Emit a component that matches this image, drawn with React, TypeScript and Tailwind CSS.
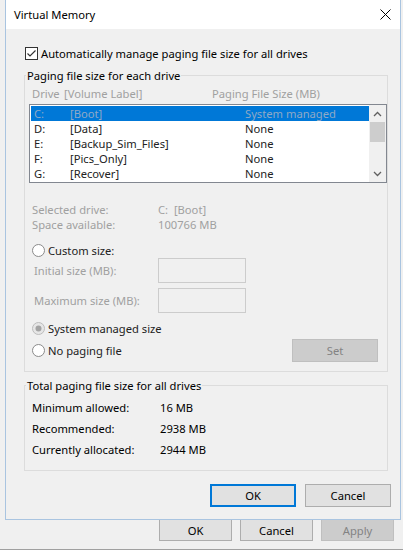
import { type ReactNode } from 'react';
import clsx from 'clsx';

type Drive = { letter: string; label: string; size: string; selected?: boolean };

const drives: Drive[] = [
  { letter: 'C:', label: '[Boot]', size: 'System managed', selected: true },
  { letter: 'D:', label: '[Data]', size: 'None' },
  { letter: 'E:', label: '[Backup_Sim_Files]', size: 'None' },
  { letter: 'F:', label: '[Pics_Only]', size: 'None' },
  { letter: 'G:', label: '[Recover]', size: 'None' },
];

const totals = [
  { label: 'Minimum allowed:', value: '16 MB' },
  { label: 'Recommended:', value: '2938 MB' },
  { label: 'Currently allocated:', value: '2944 MB' },
];

function CheckBox() {
  return (
    <svg width="13" height="13" viewBox="0 0 13 13" className="shrink-0">
      <rect x="0.5" y="0.5" width="12" height="12" fill="#fff" stroke="#333" />
      <path d="M2.5 6.5 L5 9 L10.5 3.5" fill="none" stroke="#333" strokeWidth="1.2" />
    </svg>
  );
}

function Radio({ checked = false, disabled = false }: { checked?: boolean; disabled?: boolean }) {
  return (
    <svg width="13" height="13" viewBox="0 0 13 13" className="shrink-0">
      <circle cx="6.5" cy="6.5" r="6" fill={disabled ? '#e6e6e6' : '#fff'} stroke={disabled ? '#bcbcbc' : '#8a8a8a'} />
      {checked && <circle cx="6.5" cy="6.5" r="3" fill="#a3a3a3" />}
    </svg>
  );
}

function GroupBox({ title, className, children }: { title: string; className?: string; children?: ReactNode }) {
  return (
    <div className={clsx('relative border border-[#dcdcdc]', className)}>
      <span className="absolute -top-[8px] left-[1px] bg-[#f0f0f0] px-px leading-[15px] text-black">{title}</span>
      {children}
    </div>
  );
}

function Chevron({ up }: { up?: boolean }) {
  return (
    <svg width="9" height="6" viewBox="0 0 9 6">
      <path d={up ? 'M1 5 L4.5 1.5 L8 5' : 'M1 1 L4.5 4.5 L8 1'} fill="none" stroke="#606060" strokeWidth="1.3" />
    </svg>
  );
}

function DriveList() {
  return (
    <div className="ml-[4px] mt-[3px] flex h-[79px] w-[358px] border border-[#828790] bg-white">
      <div className="flex-1 pl-px pt-px">
        {drives.map((d) => (
          <div
            key={d.letter}
            className={clsx(
              'flex h-[15px] items-center pl-[3px] leading-[14px]',
              d.selected ? 'bg-[#0078d7] text-[#8fa9c6]' : 'text-[#222]'
            )}
          >
            <span className="w-[36px]">{d.letter}</span>
            <span className="w-[175px]">{d.label}</span>
            <span>{d.size}</span>
          </div>
        ))}
      </div>
      <div className="flex w-[17px] flex-col items-center bg-[#f0f0f0]">
        <div className="flex h-[17px] items-center justify-center">
          <Chevron up />
        </div>
        <div className="h-[20px] w-[15px] bg-[#cdcdcd]" />
        <div className="flex-1" />
        <div className="flex h-[17px] items-center justify-center">
          <Chevron />
        </div>
      </div>
    </div>
  );
}

function Button({ children, primary, disabled, className }: { children: ReactNode; primary?: boolean; disabled?: boolean; className?: string }) {
  return (
    <div
      className={clsx(
        'flex items-center justify-center',
        primary && 'border-2 border-[#0078d7] bg-[#e1e1e1] text-black',
        disabled && 'border border-[#bfbfbf] bg-[#cccccc] text-[#838383]',
        !primary && !disabled && 'border border-[#adadad] bg-[#e1e1e1] text-black',
        className
      )}
    >
      {children}
    </div>
  );
}

export default function App() {
  return (
    <div className="h-[555px] w-[403px] overflow-hidden bg-[#f0f0f0] font-['Noto_Sans',sans-serif] text-[11.2px] leading-[15px] text-black">
      {/* dialog window */}
      <div className="ml-[5px] flex h-[520px] w-[396px] flex-col border border-t-0 border-[#a9c4e0] bg-[#f0f0f0]">
        <div className="flex h-[29px] items-center justify-between bg-white pl-[8px] pr-[9px]">
          <span>Virtual Memory</span>
          <svg width="11" height="11" viewBox="0 0 11 11">
            <path d="M0.5 0.5 L10.5 10.5 M10.5 0.5 L0.5 10.5" stroke="#000" strokeWidth="1" />
          </svg>
        </div>

        <div className="ml-[19px] mt-[18px] flex h-[13px] items-center gap-[3px]">
          <CheckBox />
          <span>Automatically manage paging file size for all drives</span>
        </div>

        <GroupBox title="Paging file size for each drive" className="ml-[18px] mt-[15px] h-[297px] w-[364px]">
          <div className="mt-[10px] flex pl-[7px] text-[#a0a0a0]">
            <span className="w-[32px]">Drive</span>
            <span className="w-[148px]">[Volume Label]</span>
            <span>Paging File Size (MB)</span>
          </div>
          <DriveList />

          <div className="mt-[19px] pl-[7px] text-[#a0a0a0]">
            <div className="flex h-[15px] items-center leading-[14px]">
              <span className="w-[126px]">Selected drive:</span>
              <span>C:&nbsp; [Boot]</span>
            </div>
            <div className="flex h-[15px] items-center leading-[14px]">
              <span className="w-[126px]">Space available:</span>
              <span>100766 MB</span>
            </div>
          </div>

          <div className="mt-[11px] flex h-[15px] items-center gap-[3px] pl-[7px] text-[#222]">
            <Radio />
            <span>Custom size:</span>
          </div>
          <div className="flex h-[25px] items-center pl-[9px] text-[#a0a0a0]">
            <span className="w-[124px]">Initial size (MB):</span>
            <div className="h-[25px] w-[88px] border border-[#cccccc] bg-[#f0f0f0]" />
          </div>
          <div className="mt-[5px] flex h-[25px] items-center pl-[9px] text-[#a0a0a0]">
            <span className="w-[124px]">Maximum size (MB):</span>
            <div className="h-[25px] w-[88px] border border-[#cccccc] bg-[#f0f0f0]" />
          </div>

          <div className="mt-[8px] flex h-[15px] items-center gap-[3px] pl-[7px] text-[#222]">
            <Radio checked disabled />
            <span>System managed size</span>
          </div>
          <div className="mt-[3px] flex h-[23px] items-center pl-[7px] pr-[9px] text-[#222]">
            <Radio />
            <span className="ml-[3px]">No paging file</span>
            <Button disabled className="ml-auto h-[23px] w-[86px]">
              Set
            </Button>
          </div>
        </GroupBox>

        <GroupBox title="Total paging file size for all drives" className="ml-[18px] mt-[13px] h-[86px] w-[364px]">
          <div className="mt-[11px] pl-[7px]">
            {totals.map((t) => (
              <div key={t.label} className="flex h-[21px] items-center">
                <span className="w-[128px]">{t.label}</span>
                <span>{t.value}</span>
              </div>
            ))}
          </div>
        </GroupBox>

        <div className="mr-[9px] mt-[13px] flex justify-end gap-[9px]">
          <Button primary className="h-[23px] w-[86px]">
            OK
          </Button>
          <Button className="h-[23px] w-[86px]">Cancel</Button>
        </div>
      </div>

      {/* parent window buttons peeking out below */}
      <div className="ml-[159px] flex gap-[8px]">
        <Button className="h-[21px] w-[73px] !border-t-0">OK</Button>
        <Button className="h-[21px] w-[73px] !border-t-0">Cancel</Button>
        <Button disabled className="h-[21px] w-[73px] !border-t-0">
          Apply
        </Button>
      </div>
      <div className="mt-[8px] h-px bg-[#a0a0a0]" />
      <div className="h-[10px] bg-white" />
    </div>
  );
}
